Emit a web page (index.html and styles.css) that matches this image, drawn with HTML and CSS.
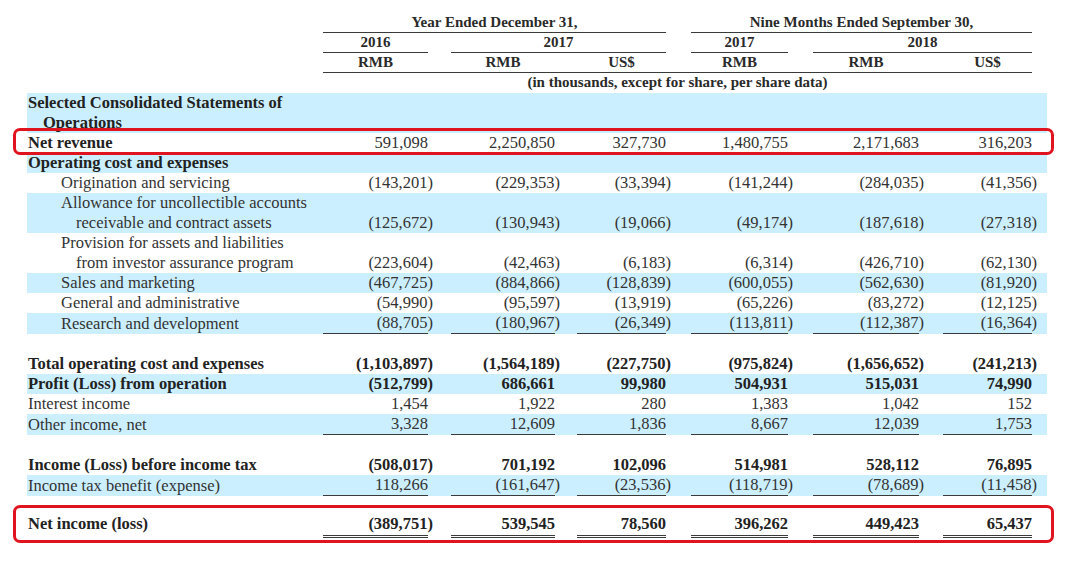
FILE: index.html
```html
<!DOCTYPE html>
<html lang="en">
<head>
<meta charset="utf-8">
<title>Selected Consolidated Statements of Operations</title>
<link rel="stylesheet" href="styles.css">
</head>
<body>
<div class="sheet">
  <div class="hrow">
    <div class="lab"></div>
    <div class="h span-a"><div class="in">Year Ended December 31,</div></div>
    <div class="h span-b"><div class="in">Nine Months Ended September 30,</div></div>
  </div>
  <div class="hrow">
    <div class="lab"></div>
    <div class="h c1"><div class="in">2016</div></div>
    <div class="h span-c"><div class="in">2017</div></div>
    <div class="h c4"><div class="in">2017</div></div>
    <div class="h span-d"><div class="in">2018</div></div>
  </div>
  <div class="hrow ruled">
    <div class="lab"></div>
    <div class="h c1"><div class="in">RMB</div></div>
    <div class="h c2"><div class="in">RMB</div></div>
    <div class="h c3"><div class="in">US$</div></div>
    <div class="h c4"><div class="in">RMB</div></div>
    <div class="h c5"><div class="in">RMB</div></div>
    <div class="h c6"><div class="in">US$</div></div>
  </div>
  <div class="hrow">
    <div class="lab"></div>
    <div class="h span-all"><div class="in">(in thousands, except for share, per share data)</div></div>
  </div>

  <div class="row blue b">
    <div class="lab">Selected Consolidated Statements of<br>Operations</div>
  </div>

  <div class="row b-lab hl hl-rev">
    <div class="lab">Net revenue</div>
    <div class="v c1"><span>591,098</span></div>
    <div class="v c2"><span>2,250,850</span></div>
    <div class="v c3"><span>327,730</span></div>
    <div class="v c4"><span>1,480,755</span></div>
    <div class="v c5"><span>2,171,683</span></div>
    <div class="v c6"><span>316,203</span></div>
  </div>

  <div class="row blue b">
    <div class="lab">Operating cost and expenses</div>
  </div>

  <div class="row">
    <div class="lab l1">Origination and servicing</div>
    <div class="v c1"><span>(143,201<i>)</i></span></div>
    <div class="v c2"><span>(229,353<i>)</i></span></div>
    <div class="v c3"><span>(33,394<i>)</i></span></div>
    <div class="v c4"><span>(141,244<i>)</i></span></div>
    <div class="v c5"><span>(284,035<i>)</i></span></div>
    <div class="v c6"><span>(41,356<i>)</i></span></div>
  </div>

  <div class="row blue">
    <div class="lab l1">Allowance for uncollectible accounts<br>receivable and contract assets</div>
    <div class="v c1"><span>(125,672<i>)</i></span></div>
    <div class="v c2"><span>(130,943<i>)</i></span></div>
    <div class="v c3"><span>(19,066<i>)</i></span></div>
    <div class="v c4"><span>(49,174<i>)</i></span></div>
    <div class="v c5"><span>(187,618<i>)</i></span></div>
    <div class="v c6"><span>(27,318<i>)</i></span></div>
  </div>

  <div class="row">
    <div class="lab l1">Provision for assets and liabilities<br>from investor assurance program</div>
    <div class="v c1"><span>(223,604<i>)</i></span></div>
    <div class="v c2"><span>(42,463<i>)</i></span></div>
    <div class="v c3"><span>(6,183<i>)</i></span></div>
    <div class="v c4"><span>(6,314<i>)</i></span></div>
    <div class="v c5"><span>(426,710<i>)</i></span></div>
    <div class="v c6"><span>(62,130<i>)</i></span></div>
  </div>

  <div class="row blue">
    <div class="lab l1">Sales and marketing</div>
    <div class="v c1"><span>(467,725<i>)</i></span></div>
    <div class="v c2"><span>(884,866<i>)</i></span></div>
    <div class="v c3"><span>(128,839<i>)</i></span></div>
    <div class="v c4"><span>(600,055<i>)</i></span></div>
    <div class="v c5"><span>(562,630<i>)</i></span></div>
    <div class="v c6"><span>(81,920<i>)</i></span></div>
  </div>

  <div class="row">
    <div class="lab l1">General and administrative</div>
    <div class="v c1"><span>(54,990<i>)</i></span></div>
    <div class="v c2"><span>(95,597<i>)</i></span></div>
    <div class="v c3"><span>(13,919<i>)</i></span></div>
    <div class="v c4"><span>(65,226<i>)</i></span></div>
    <div class="v c5"><span>(83,272<i>)</i></span></div>
    <div class="v c6"><span>(12,125<i>)</i></span></div>
  </div>

  <div class="row blue u">
    <div class="lab l1">Research and development</div>
    <div class="v c1"><span>(88,705<i>)</i></span></div>
    <div class="v c2"><span>(180,967<i>)</i></span></div>
    <div class="v c3"><span>(26,349<i>)</i></span></div>
    <div class="v c4"><span>(113,811<i>)</i></span></div>
    <div class="v c5"><span>(112,387<i>)</i></span></div>
    <div class="v c6"><span>(16,364<i>)</i></span></div>
  </div>

  <div class="row gap"></div>

  <div class="row b">
    <div class="lab">Total operating cost and expenses</div>
    <div class="v c1"><span>(1,103,897<i>)</i></span></div>
    <div class="v c2"><span>(1,564,189<i>)</i></span></div>
    <div class="v c3"><span>(227,750<i>)</i></span></div>
    <div class="v c4"><span>(975,824<i>)</i></span></div>
    <div class="v c5"><span>(1,656,652<i>)</i></span></div>
    <div class="v c6"><span>(241,213<i>)</i></span></div>
  </div>

  <div class="row blue b">
    <div class="lab">Profit (Loss) from operation</div>
    <div class="v c1"><span>(512,799<i>)</i></span></div>
    <div class="v c2"><span>686,661</span></div>
    <div class="v c3"><span>99,980</span></div>
    <div class="v c4"><span>504,931</span></div>
    <div class="v c5"><span>515,031</span></div>
    <div class="v c6"><span>74,990</span></div>
  </div>

  <div class="row">
    <div class="lab">Interest income</div>
    <div class="v c1"><span>1,454</span></div>
    <div class="v c2"><span>1,922</span></div>
    <div class="v c3"><span>280</span></div>
    <div class="v c4"><span>1,383</span></div>
    <div class="v c5"><span>1,042</span></div>
    <div class="v c6"><span>152</span></div>
  </div>

  <div class="row blue u">
    <div class="lab">Other income, net</div>
    <div class="v c1"><span>3,328</span></div>
    <div class="v c2"><span>12,609</span></div>
    <div class="v c3"><span>1,836</span></div>
    <div class="v c4"><span>8,667</span></div>
    <div class="v c5"><span>12,039</span></div>
    <div class="v c6"><span>1,753</span></div>
  </div>

  <div class="row gap"></div>

  <div class="row b">
    <div class="lab">Income (Loss) before income tax</div>
    <div class="v c1"><span>(508,017<i>)</i></span></div>
    <div class="v c2"><span>701,192</span></div>
    <div class="v c3"><span>102,096</span></div>
    <div class="v c4"><span>514,981</span></div>
    <div class="v c5"><span>528,112</span></div>
    <div class="v c6"><span>76,895</span></div>
  </div>

  <div class="row blue u">
    <div class="lab">Income tax benefit (expense)</div>
    <div class="v c1"><span>118,266</span></div>
    <div class="v c2"><span>(161,647<i>)</i></span></div>
    <div class="v c3"><span>(23,536<i>)</i></span></div>
    <div class="v c4"><span>(118,719<i>)</i></span></div>
    <div class="v c5"><span>(78,689<i>)</i></span></div>
    <div class="v c6"><span>(11,458<i>)</i></span></div>
  </div>

  <div class="row gap gap-short"></div>

  <div class="row b uu hl hl-net">
    <div class="lab">Net income (loss)</div>
    <div class="v c1"><span>(389,751<i>)</i></span></div>
    <div class="v c2"><span>539,545</span></div>
    <div class="v c3"><span>78,560</span></div>
    <div class="v c4"><span>396,262</span></div>
    <div class="v c5"><span>449,423</span></div>
    <div class="v c6"><span>65,437</span></div>
  </div>
</div>
</body>
</html>
```
FILE: styles.css
```css
html, body {
  margin: 0;
  padding: 0;
  background: #ffffff;
}

.sheet {
  padding: 13px 0 40px 27px;
  font-family: "Liberation Serif", "Times New Roman", serif;
  font-size: 15px;
  color: #333333;
}

.hrow,
.row {
  display: grid;
  grid-template-columns: 296px 105px 127px 111px 122px 131px 113px 15px;
  width: 1020px;
}

.hrow {
  height: 20px;
  line-height: 19px;
  font-weight: bold;
  color: #2a2a2a;
}

.h {
  padding-left: 0;
}
.h .in {
  text-align: center;
  height: 19px;
  border-bottom: 1px solid #3a3a3a;
  white-space: nowrap;
}

.c1 { grid-column: 2; }
.c2 { grid-column: 3; padding-left: 23px; }
.c3 { grid-column: 4; padding-left: 22px; }
.c4 { grid-column: 5; padding-left: 25px; }
.c5 { grid-column: 6; padding-left: 25px; }
.c6 { grid-column: 7; padding-left: 24px; }

.span-a { grid-column: 2 / 5; }
.span-b { grid-column: 5 / 8; padding-left: 25px; }
.span-c { grid-column: 3 / 5; padding-left: 23px; }
.span-d { grid-column: 6 / 8; padding-left: 25px; }
.span-all { grid-column: 2 / 8; }
.span-all .in { border-bottom: none; }

.hrow.ruled .h .in { border-bottom: none; }
.hrow.ruled .h { border-bottom: 1px solid #3a3a3a; height: 19px; }

.row {
  font-size: 16.5px;
  line-height: 20px;
  align-items: end;
}

.row.blue {
  background: #ccefff;
}

.lab {
  grid-column: 1;
  padding-left: 16px;
  text-indent: -15px;
  white-space: nowrap;
}
.lab.l1 {
  padding-left: 49px;
  text-indent: -15px;
}

.b .lab,
.b-lab .lab,
.b .v {
  font-weight: bold;
  color: #222222;
}

.v span {
  display: block;
  text-align: right;
  white-space: nowrap;
}
.v i {
  font-style: normal;
  margin-right: -5px;
}

.row.u .v span {
  border-bottom: 1px solid #3a3a3a;
  line-height: 20px;
}

.row.gap {
  height: 20px;
}
.row.gap-short {
  height: 18px;
}

.row.uu {
  align-items: start;
}
.row.uu .v span {
  border-bottom: 3px double #3a3a3a;
  line-height: 20px;
  padding-bottom: 1px;
}

.hl {
  position: relative;
}
.hl::before {
  content: "";
  position: absolute;
  left: -14px;
  right: -7px;
  border: 3px solid #e0141e;
  border-radius: 7px;
  pointer-events: none;
}
.hl-rev::before {
  top: -5px;
  bottom: -2px;
}
.hl-net::before {
  top: -9px;
  bottom: -5px;
}
```
